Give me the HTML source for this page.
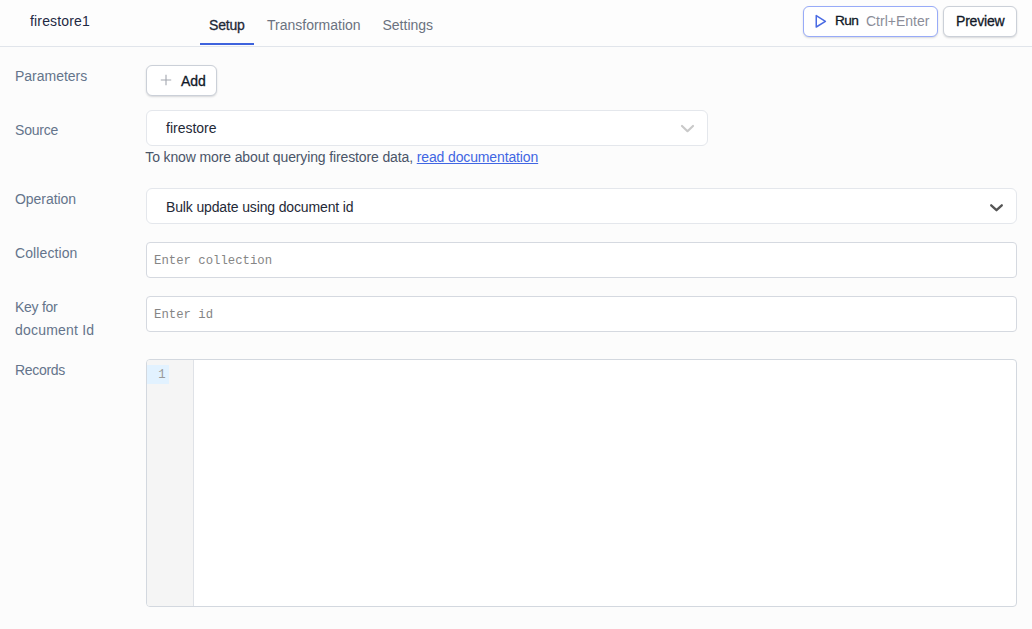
<!DOCTYPE html>
<html lang="en">
<head>
<meta charset="utf-8">
<title>firestore1</title>
<style>
  html, body { margin: 0; padding: 0; }
  body {
    width: 1032px; height: 629px; overflow: hidden; position: relative;
    background: #fcfcfc;
    font-family: "Liberation Sans", sans-serif;
    font-size: 14px; line-height: 20px; color: #1f2937;
  }
  .abs { position: absolute; white-space: nowrap; }
  .header { position: absolute; left: 0; top: 0; width: 1032px; height: 46px; border-bottom: 1px solid #e1e5eb; background: #fdfdfd; }
  .title { left: 30px; top: 11px; color: #1f2a44; letter-spacing: 0.16px; }
  .tab { top: 15px; color: #6b7280; }
  .tab.active { color: #1f2937; -webkit-text-stroke: 0.3px #1f2937; }
  .tab-underline { position: absolute; left: 200px; top: 43px; width: 54px; height: 2px; background: #3e63dd; }
  .btn {
    position: absolute; box-sizing: border-box; height: 31px; top: 6px;
    border: 1px solid #cbd0d8; border-radius: 6px; background: #fff;
    box-shadow: 0 1px 2px rgba(16,24,40,0.16);
  }
  .btn.run { left: 803px; width: 135px; border-color: #98abf8; }
  .btn.preview { left: 943px; width: 74px; }
  .btn.add { left: 146px; top: 65px; width: 71px; }
  .btn .abs { top: 4.4px; }
  .medium { color: #111827; -webkit-text-stroke: 0.3px #111827; }
  .muted { color: #8b8d98; }
  .label { left: 15px; color: #64748b; }
  .select {
    position: absolute; box-sizing: border-box; left: 146px; height: 36px;
    border: 1px solid #e4e7ec; border-radius: 6px; background: #fff;
  }
  .select .abs { left: 19px; top: 7px; color: #1f2937; }
  .input {
    position: absolute; box-sizing: border-box; left: 146px; width: 871px; height: 36px;
    border: 1px solid #d5d9e0; border-radius: 4px; background: #fff;
  }
  .input .abs { left: 7px; top: 7.5px; font-family: "Liberation Mono", monospace; font-size: 12.3px; color: #858585; }
  .help { left: 145.3px; top: 147px; color: #4a5568; letter-spacing: -0.128px; }
  .help a { color: #4166e3; text-decoration: underline; }
  .editor {
    position: absolute; box-sizing: border-box; left: 146px; top: 359px; width: 871px; height: 248px;
    border: 1px solid #d3d8df; border-radius: 4px; background: #fff; overflow: hidden;
  }
  .gutter { position: absolute; left: 0; top: 0; width: 46px; height: 100%; background: #f5f5f5; border-right: 1px solid #dfe2e7; }
  .lineno-bg { position: absolute; left: 0; top: 5px; width: 22px; height: 19px; background: #e2f2ff; }
  .lineno { left: 11.3px; top: 6px; font-family: "Liberation Mono", monospace; font-size: 12.3px; line-height: 19px; color: #999; }
</style>
</head>
<body>
  <div class="header">
    <span class="abs title">firestore1</span>
    <span class="abs tab active" style="left:209px;letter-spacing:-0.2px">Setup</span>
    <span class="abs tab" style="left:267px">Transformation</span>
    <span class="abs tab" style="left:382.5px">Settings</span>
    <div class="tab-underline"></div>
    <div class="btn run">
      <svg class="abs" style="left:9.5px;top:6.8px" width="14" height="15" viewBox="0 0 14 15"><path d="M2.25 1.6 L11.4 7.3 L2.25 13 Z" fill="none" stroke="#4a6be3" stroke-width="1.5" stroke-linejoin="round"/></svg>
      <span class="abs medium" style="left:31px;font-size:13.7px;letter-spacing:-0.6px">Run</span>
      <span class="abs muted" style="left:62px">Ctrl+Enter</span>
    </div>
    <div class="btn preview"><span class="abs medium" style="left:12px;letter-spacing:-0.2px">Preview</span></div>
  </div>

  <span class="abs label" style="top:66px;letter-spacing:-0.01px">Parameters</span>
  <div class="btn add">
    <svg class="abs" style="left:13.3px;top:8px" width="12" height="12" viewBox="0 0 12 12"><path d="M6 0.8 V11.2 M0.8 6 H11.2" stroke="#a3a7b0" stroke-width="1.1" fill="none"/></svg>
    <span class="abs medium" style="left:34px;top:4.5px">Add</span>
  </div>

  <span class="abs label" style="top:120px;letter-spacing:-0.2px">Source</span>
  <div class="select" style="top:110px;width:562px">
    <span class="abs" style="top:7.4px">firestore</span>
    <svg class="abs" style="left:533px;top:13px;color:#c4c4c4" width="15" height="10" viewBox="0 0 15 10"><path d="M2 2 L7.5 7.2 L13 2" fill="none" stroke="#c9c9c9" stroke-width="2.2" stroke-linecap="round" stroke-linejoin="round"/></svg>
  </div>
  <span class="abs help">To know more about querying firestore data, <a>read documentation</a></span>

  <span class="abs label" style="top:189px;letter-spacing:-0.05px">Operation</span>
  <div class="select" style="top:188px;width:871px">
    <span class="abs" style="top:8.2px;letter-spacing:-0.14px">Bulk update using document id</span>
    <svg class="abs" style="left:842px;top:14px" width="15" height="10" viewBox="0 0 15 10"><path d="M2.2 2.3 L7.5 7.2 L12.8 2.3" fill="none" stroke="#555" stroke-width="2.3" stroke-linecap="round" stroke-linejoin="round"/></svg>
  </div>

  <span class="abs label" style="top:243px;letter-spacing:0.1px">Collection</span>
  <div class="input" style="top:242px"><span class="abs">Enter collection</span></div>

  <span class="abs label" style="top:297px;letter-spacing:-0.28px">Key for</span>
  <span class="abs label" style="top:320px;letter-spacing:0.2px">document Id</span>
  <div class="input" style="top:296px"><span class="abs">Enter id</span></div>

  <span class="abs label" style="top:360px;letter-spacing:-0.3px">Records</span>
  <div class="editor">
    <div class="gutter"></div>
    <div class="lineno-bg"></div>
    <span class="abs lineno">1</span>
  </div>
</body>
</html>
